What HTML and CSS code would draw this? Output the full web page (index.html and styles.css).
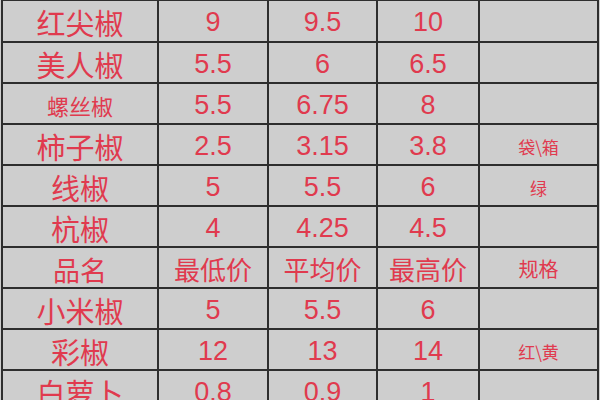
FILE: index.html
```html
<!DOCTYPE html>
<html lang="zh-CN">
<head>
<meta charset="utf-8">
<link rel="stylesheet" href="styles.css">
</head>
<body>
<div class="sheet">
  <div class="c name">红尖椒</div><div class="c num">9</div><div class="c num">9.5</div><div class="c num">10</div><div class="c spec"></div>
  <div class="c name">美人椒</div><div class="c num">5.5</div><div class="c num">6</div><div class="c num">6.5</div><div class="c spec"></div>
  <div class="c name small">螺丝椒</div><div class="c num">5.5</div><div class="c num">6.75</div><div class="c num">8</div><div class="c spec"></div>
  <div class="c name">柿子椒</div><div class="c num">2.5</div><div class="c num">3.15</div><div class="c num">3.8</div><div class="c spec">袋\箱</div>
  <div class="c name">线椒</div><div class="c num">5</div><div class="c num">5.5</div><div class="c num">6</div><div class="c spec">绿</div>
  <div class="c name">杭椒</div><div class="c num">4</div><div class="c num">4.25</div><div class="c num">4.5</div><div class="c spec"></div>
  <div class="c name head">品名</div><div class="c head">最低价</div><div class="c head">平均价</div><div class="c head">最高价</div><div class="c spec headspec">规格</div>
  <div class="c name">小米椒</div><div class="c num">5</div><div class="c num">5.5</div><div class="c num">6</div><div class="c spec"></div>
  <div class="c name">彩椒</div><div class="c num">12</div><div class="c num">13</div><div class="c num">14</div><div class="c spec">红\黄</div>
  <div class="c name">白萝卜</div><div class="c num">0.8</div><div class="c num">0.9</div><div class="c num">1</div><div class="c spec"></div>
</div>
</body>
</html>
```

FILE: styles.css
```css
html, body {
  margin: 0;
  padding: 0;
  background: #cecece;
  overflow: hidden;
}
body {
  width: 600px;
  height: 400px;
}
.sheet {
  margin-left: 1px;
  width: 594px;
  display: grid;
  grid-template-columns: 154px 108px 107px 100px 117px;
  grid-template-rows: 40px repeat(9, 39px);
  gap: 2px;
  padding: 1px 2px 2px 2px;
  background: #2e2e2e;
}
.c {
  background: #cecece;
  display: flex;
  align-items: center;
  justify-content: center;
  padding-top: 3px;
  box-sizing: border-box;
  color: #e03a4e;
  font-family: "Noto Sans CJK SC", sans-serif;
  line-height: 1;
  white-space: nowrap;
}
.name {
  font-size: 29px;
}
.name.small {
  font-size: 22px;
}
.num {
  font-family: "Liberation Sans", "Noto Sans CJK SC", sans-serif;
  font-size: 27px;
}
.head {
  font-size: 26px;
}
.name.head {
  font-size: 27px;
}
.spec {
  font-size: 17px;
}
.headspec {
  font-size: 20px;
}
```
